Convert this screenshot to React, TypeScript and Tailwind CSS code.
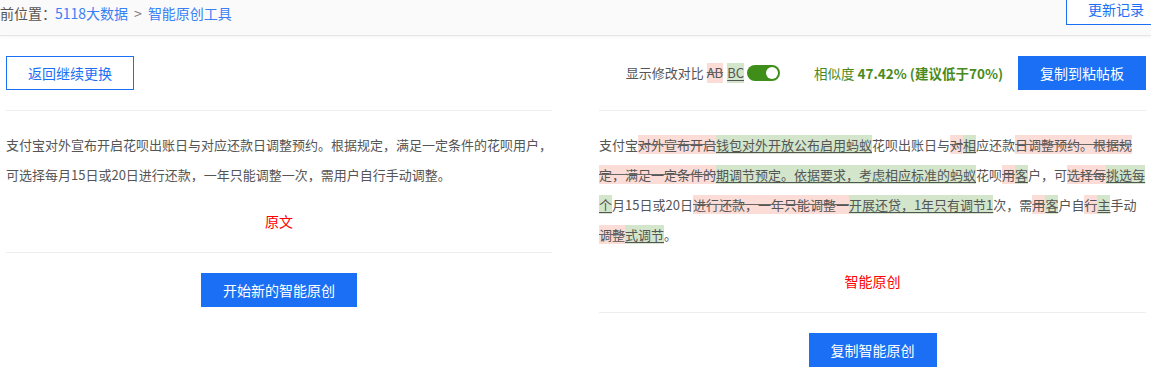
import type { ReactElement } from "react";

type Seg = ["n" | "d" | "i", string];

const diff: Seg[] = [
  ["n", "支付宝"],
  ["d", "对外宣布开启"],
  ["i", "钱包对外开放公布启用蚂蚁"],
  ["n", "花呗出账日与"],
  ["d", "对"],
  ["i", "相"],
  ["n", "应还款"],
  ["d", "日调整预约。根据规定，满足一定条件的"],
  ["i", "期调节预定。依据要求，考虑相应标准的蚂蚁"],
  ["n", "花呗"],
  ["d", "用"],
  ["i", "客"],
  ["n", "户，可"],
  ["d", "选择每"],
  ["i", "挑选每个"],
  ["n", "月15日或20日"],
  ["d", "进行还款，一年只能调整一"],
  ["i", "开展还贷，1年只有调节1"],
  ["n", "次，需"],
  ["d", "用"],
  ["i", "客"],
  ["n", "户自"],
  ["d", "行"],
  ["i", "主"],
  ["n", "手动"],
  ["d", "调整"],
  ["i", "式调节"],
  ["n", "。"],
];

function DiffText(): ReactElement {
  return (
    <p className="text-[13px] leading-[30px] text-[#555]">
      {diff.map(([kind, text], idx) => {
        if (kind === "d") {
          return (
            <span key={idx} className="bg-[#fcdcd6] line-through decoration-[#666]">
              {text}
            </span>
          );
        }
        if (kind === "i") {
          return (
            <span key={idx} className="bg-[#d3e6cb] underline decoration-[#555] underline-offset-2">
              {text}
            </span>
          );
        }
        return <span key={idx}>{text}</span>;
      })}
    </p>
  );
}

function SolidButton({ label }: { label: string }): ReactElement {
  return (
    <button
      type="button"
      className="h-[34px] bg-[#1a6ff4] px-[22px] text-[14px] leading-[34px] text-white"
    >
      {label}
    </button>
  );
}

export default function App(): ReactElement {
  return (
    <div className="h-[376px] w-[1151px] overflow-hidden bg-white font-['Noto_Sans_CJK_SC','Microsoft_YaHei',sans-serif]">
      <header className="flex h-[36px] items-start justify-between overflow-hidden border-b border-[#e6e6e6] bg-[#fafafa] shadow-[0_1px_3px_rgba(0,0,0,0.05)]">
        <div className="-ml-[14px] flex pt-[3px] text-[14px] leading-[20px]">
          <span className="text-[#555]">当前位置：</span>
          <span className="-ml-[1px] text-[#3b7ff5]">5118大数据</span>
          <span className="mx-[6px] text-[#777]">&gt;</span>
          <span className="text-[#3b7ff5]">智能原创工具</span>
        </div>
        <button
          type="button"
          className="-mr-[15px] -mt-[7px] h-[32px] border border-[#1a6ff4] bg-white px-[21px] text-[14px] leading-[30px] text-[#1a6ff4]"
        >
          更新记录
        </button>
      </header>

      <main className="flex gap-[47px] pl-[6px]">
        <section className="w-[546px]">
          <div className="border-b border-[#eee] py-[20px]">
            <button
              type="button"
              className="h-[34px] border border-[#1a6ff4] bg-white px-[21px] text-[14px] leading-[32px] text-[#1a6ff4]"
            >
              返回继续更换
            </button>
          </div>
          <div className="border-b border-[#eee] pb-[16px] pt-[19px]">
            <p className="text-[13px] leading-[30px] text-[#555]">
              支付宝对外宣布开启花呗出账日与对应还款日调整预约。根据规定，满足一定条件的花呗用户，可选择每月15日或20日进行还款，一年只能调整一次，需用户自行手动调整。
            </p>
            <p className="mt-[16px] text-center text-[14px] leading-[30px] text-[#ff0000]">原文</p>
          </div>
          <div className="flex justify-center pt-[20px]">
            <SolidButton label="开始新的智能原创" />
          </div>
        </section>

        <section className="w-[547px]">
          <div className="flex items-center justify-end border-b border-[#eee] py-[20px]">
            <div className="flex items-center text-[13px] text-[#555]">
              <span>显示修改对比</span>
              <span className="ml-[3px] bg-[#fcdcd6] line-through decoration-[#666]">AB</span>
              <span className="ml-[4px] bg-[#d3e6cb] underline decoration-[#555] underline-offset-2">BC</span>
              <span className="ml-[3px] flex h-[16px] w-[33px] items-center justify-end rounded-full bg-[#3e8e19] pr-[2px]">
                <span className="h-[12px] w-[12px] rounded-full bg-white" />
              </span>
            </div>
            <div className="ml-[34px] text-[13.5px] text-[#4a8a1c]">
              相似度 <span className="font-bold">47.42% (建议低于70%)</span>
            </div>
            <div className="ml-[15px]">
              <SolidButton label="复制到粘帖板" />
            </div>
          </div>
          <div className="border-b border-[#eee] pb-[16px] pt-[19px]">
            <DiffText />
            <p className="mt-[16px] text-center text-[14px] leading-[30px] text-[#ff0000]">智能原创</p>
          </div>
          <div className="flex justify-center pt-[20px]">
            <SolidButton label="复制智能原创" />
          </div>
        </section>
      </main>
    </div>
  );
}
